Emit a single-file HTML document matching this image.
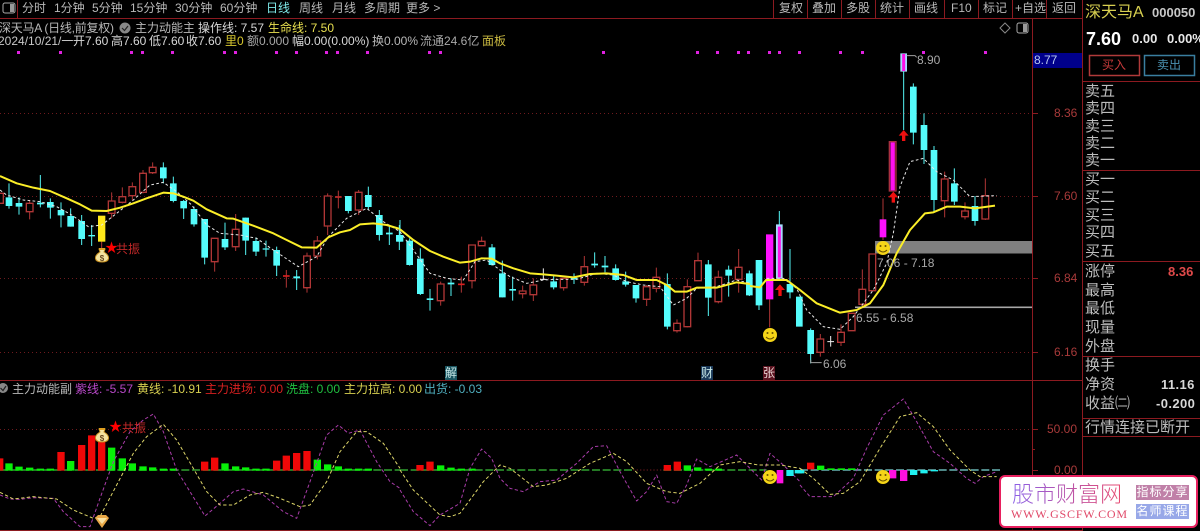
<!DOCTYPE html>
<html><head><meta charset="utf-8"><style>
html,body{margin:0;padding:0;background:#000}
#p{position:relative;width:1200px;height:531px;overflow:hidden;background:#000;font-family:"Liberation Sans","Noto Sans CJK SC",sans-serif;font-size:12px;color:#b8b8b8}
.t{position:absolute;white-space:nowrap;line-height:14px}
.r{text-align:right}
.g{color:#b4b4b4}
.big{font-size:15px;line-height:18px;color:#bdbdbd;letter-spacing:0}
svg{position:absolute;left:0;top:0}
.ax{color:#a83a3a;font-size:12px}
</style></head><body><div id="p">
<svg width="1200" height="531" viewBox="0 0 1200 531" fill="none">
<!-- chrome lines -->
<g stroke="#8c1a20" stroke-width="1">
<path d="M0 18.5H1082M17.5 0V18M773.5 0V18M807.5 0V18M841.5 0V18M875.5 0V18M909.5 0V18M944.5 0V18M978.5 0V18M1012.5 0V18M1046.5 0V18"/>
<path d="M1032.5 18V530M1082.5 0V531M0 380.5H1082M0 530.5H1082M1082 81.5H1200M1082 170.5H1200M1082 261.5H1200M1082 356.5H1200M1082 418.5H1200M1082 436.5H1200"/>
<path d="M1032 113.5H1038M1032 196.5H1038M1032 278.5H1038M1032 352.5H1038M1032 429.5H1038M1032 470.5H1038M1032 449.5H1035"/>
</g>
<g stroke="#6e1a1e" stroke-width="1" stroke-dasharray="1 3">
<path d="M0 113.5H1032M0 196.5H1032M0 278.5H1032M0 352.5H1032M0 429.5H1032"/>
</g>
<!-- levels -->
<rect x="875" y="241" width="157" height="12.5" fill="#808080"/>
<rect x="855" y="306.5" width="177" height="1.6" fill="#a8a8a8"/>
<rect x="1033" y="53" width="49" height="15" fill="#00008b"/>
<!-- purple dots -->
<g fill="#e020e0"><rect x="17" y="51" width="3" height="3"/><rect x="59" y="51" width="3" height="3"/><rect x="130" y="51" width="3" height="3"/><rect x="141" y="51" width="3" height="3"/><rect x="171" y="51" width="3" height="3"/><rect x="223" y="51" width="3" height="3"/><rect x="234" y="51" width="3" height="3"/><rect x="275" y="51" width="3" height="3"/><rect x="295" y="51" width="3" height="3"/><rect x="325" y="51" width="3" height="3"/><rect x="336" y="51" width="3" height="3"/><rect x="366" y="51" width="3" height="3"/><rect x="428" y="51" width="3" height="3"/><rect x="439" y="51" width="3" height="3"/><rect x="602" y="51" width="3" height="3"/><rect x="696" y="51" width="3" height="3"/><rect x="716" y="51" width="3" height="3"/><rect x="737" y="51" width="3" height="3"/><rect x="747" y="51" width="3" height="3"/><rect x="768" y="51" width="3" height="3"/><rect x="778" y="51" width="3" height="3"/><rect x="798" y="51" width="3" height="3"/><rect x="839" y="51" width="3" height="3"/><rect x="861" y="51" width="3" height="3"/><rect x="922" y="51" width="3" height="3"/><rect x="984" y="51" width="3" height="3"/></g>

<!-- main chart part 1 -->
<g transform="translate(0,150) scale(.33333)">
<path stroke="#55f5f5" stroke-width="3" d="M27 100V176M57 142V194M121 75V172M151 145V206M183 157V232M212 175V230M245 195V285M275 225V288M490 37V100M520 80V157M551 150V207M582 170V230M614 207V343M675 218V300M737 203V315M768 262V318M798 272V320M830 290V378M890 360V420M1045 138V190M1105 110V178M1138 180V272M1168 230V285M1198 225V300"/>
<path stroke="#55fcfc" stroke-width="20" d="M27 142V168M57 159V170M151 156V173M183 180V196M212 198V230M245 213V267M490 52V85M520 100V153M551 153V175M582 177V223M614 207V323M675 267V292M737 203V272M768 273V305M830 300V347M1045 138V183M1105 135V171M1138 195V255M1198 255V275"/>
<path stroke="#55fcfc" stroke-width="20" d="M121 158V163M275 255V259M798 295V299M890 379V385M1168 248V253"/>
<path stroke="#b03636" stroke-width="3" d="M89 150V208M335 127V205M367 112V160M397 97V150M429 60V130M458 37V72M644 265V365M707 192V303M859 360V413M921 308V428M952 258V328M983 130V255M1015 122V175M1076 120V195M305 275V298"/>
<path stroke="#b03636" stroke-width="4" fill="#000" d="M-10 130h20V160h-20zM79 160h20V185h-20zM325 153h20V190h-20zM357 140h20V157h-20zM387 110h20V137h-20zM419 70h20V127h-20zM448 52h20V68h-20zM634 265h20V335h-20zM697 238h20V290h-20zM911 318h20V413h-20zM942 273h20V318h-20zM973 138h20V228h-20zM1066 127h20V180h-20z"/>
<path stroke="#d82020" stroke-width="5" d="M849 378H869"/>
<path stroke="#c02c2c" stroke-width="5" d="M1005 141H1025"/>
<path stroke="#ffe81a" stroke-width="22" d="M305 197V275"/>
<polyline stroke="#e8e8e8" stroke-width="3" stroke-dasharray="8 7" points="0,120 20,135 70,150 120,155 170,170 215,195 265,230 305,225 350,190 400,150 450,105 490,97 530,125 575,165 620,225 660,250 720,255 770,265 820,300 850,320 895,350 950,320 985,260 1040,205 1100,175 1150,215 1200,245"/>
<polyline stroke="#fbee28" stroke-width="6" stroke-linejoin="round" points="0,78 50,100 100,113 150,123 200,145 240,163 275,182 320,183 360,173 400,160 440,145 490,128 520,130 550,140 580,152 620,178 680,205 700,206 760,227 820,250 870,275 905,292 950,293 985,262 1020,247 1050,240 1080,223 1120,220 1160,225 1200,237"/>
</g>

<!-- main chart part 2 -->
<g transform="translate(400,220) scale(.33333)">
<path stroke="#55f5f5" stroke-width="3" d="M0 0V65M29 55V137M61 85V225M90 207V272M153 175V228M276 72V137M307 122V232M338 170V242M461 165V208M522 160V192M584 97V143M615 108V157M647 133V182M677 155V200M708 195V248M802 160V328M925 120V288M986 137V230M1048 152V228M1077 120V270M1170 87V235"/>
<path stroke="#55fcfc" stroke-width="20" d="M0 45V65M29 62V135M61 116V222M276 82V135M307 160V232M461 184V202M647 145V180M677 184V194M708 195V235M802 192V320M925 133V233M986 149V167M1048 160V226M1077 120V256M1170 192V217M1198 230V320"/>
<path stroke="#55fcfc" stroke-width="20" d="M90 235V240M153 188V193M338 207V212M522 173V178M584 131V136M615 137V142"/>
<path stroke="#eee" stroke-width="3" d="M430 145V180M420 178H440"/>
<path stroke="#b03636" stroke-width="3" d="M122 185V257M184 170V218M216 75V205M245 50V78M368 197V235M400 175V243M491 175V212M553 108V197M740 195V258M769 143V217M831 298V338M862 178V322M894 98V183M955 152V250M1016 87V218M1109 238V322"/>
<path stroke="#b03636" stroke-width="4" fill="#000" d="M112 192h20V242h-20zM206 75h20V182h-20zM235 64h20V77h-20zM358 213h20V221h-20zM390 195h20V224h-20zM481 175h20V203h-20zM543 140h20V187h-20zM730 200h20V238h-20zM759 172h20V205h-20zM821 310h20V332h-20zM852 200h20V320h-20zM884 122h20V182h-20zM945 172h20V245h-20zM1006 142h20V178h-20z"/>
<path stroke="#d82020" stroke-width="5" d="M174 193H194"/>
<path stroke="#ff10ff" stroke-width="22" d="M1109 43V238"/>
<polyline stroke="#e8e8e8" stroke-width="3" stroke-dasharray="8 7" points="0,35 40,90 90,160 140,175 190,180 225,125 260,120 300,150 330,170 380,190 430,180 470,178 530,178 590,160 640,165 680,185 730,195 780,200 820,255 860,235 890,205 950,200 1010,180 1050,190"/>
<polyline stroke="#fbee28" stroke-width="6" stroke-linejoin="round" points="0,28 40,60 90,93 130,110 180,128 210,125 245,115 275,116 300,130 340,145 390,160 430,163 470,167 520,172 570,162 620,160 670,165 710,180 770,180 800,195 825,215 860,215 890,203 950,203 1010,187 1050,192"/>
</g>

<!-- main chart part 3 -->
<g transform="translate(750,40) scale(.33333)">
<path stroke="#55f5f5" stroke-width="3" d="M88 513V720M182 865V970M461 95V270M490 130V313M522 220V372M552 318V515M613 385V495M675 468V557"/>
<path stroke="#a8d8ff" stroke-width="20" d="M88 553V716M461 40V95"/>
<path stroke="#ff10e8" stroke-width="9" d="M88 560V712M461 42V93"/>
<path stroke="#55fcfc" stroke-width="20" d="M182 870V942M490 140V278M522 255V330M552 330V480M613 430V485M675 498V543"/>
<path stroke="#eee" stroke-width="3" d="M242 888V920M232 905H252"/>
<path stroke="#b03636" stroke-width="3" d="M211 882V950M273 853V918M305 820V872M337 688V800M367 642V752M399 475V600M584 395V532M645 487V538M706 415V540"/>
<path stroke="#b03636" stroke-width="4" fill="#000" d="M201 897h20V937h-20zM263 877h20V907h-20zM295 820h20V872h-20zM327 748h20V793h-20zM357 642h20V752h-20zM574 417h20V482h-20zM635 513h20V530h-20zM696 467h20V537h-20z"/>
<path stroke="#ff10ff" stroke-width="20" d="M399 538V592"/>
<path stroke="#a83040" stroke-width="4" fill="#3a0818" d="M418 305h20V453h-20z"/>
<path stroke="#ff10f0" stroke-width="13" d="M428 307V451"/>
<g fill="#ee1010"><path d="M90 733L105 750H95V768H85V750H75Z"/><path d="M430 455L445 472H435V488H425V472H415Z"/><path d="M461 270L476 287H466V303H456V287H446Z"/></g>
<path stroke="#a0a0a0" stroke-width="3" d="M182 960V968H215M470 47H495L500 52"/>
<polyline stroke="#e8e8e8" stroke-width="3" stroke-dasharray="8 7" points="50,715 100,715 140,745 170,810 220,860 270,868 310,830 370,750 410,670 430,580 450,440 480,365 520,355 560,395 610,420 660,470 740,467"/>
<polyline stroke="#fbee28" stroke-width="6" stroke-linejoin="round" points="0,738 30,742 48,720 110,720 150,750 200,790 270,818 320,810 360,790 400,735 440,640 480,570 525,520 550,517 590,500 630,500 675,505 735,497"/>
</g>

<!-- sub chart -->
<g transform="translate(0,375) scale(.33333)">
<path stroke="#2a8a2a" stroke-width="5" stroke-dasharray="24 8" d="M0 285H1200"/>
<path stroke="#f00808" stroke-width="22" d="M-1 250V287M183 231V287M245 210V287M275 181V287M305 200V287M614 260V287M644 248V287M830 257V287M859 242V287M890 234V287M921 228V287"/>
<path stroke="#08f008" stroke-width="22" d="M27 265V287M57 275V287M89 278V287M121 281V287M151 281V287M212 258V287M335 218V287M367 250V287M397 265V287M429 274V287M458 277V287M490 281V287M520 281V287M675 265V287M707 274V287M737 277V287M768 281V287M798 281V287M952 254V287M983 268V287M1015 274V287M1045 281V287M1076 281V287M1105 281V287"/>
<polyline stroke="#a83ca8" stroke-width="3" stroke-dasharray="10 7" stroke-linejoin="round" points="0,360 30,372 60,373 100,368 160,370 190,410 240,455 270,455 300,370 340,260 390,170 430,135 460,117 490,170 530,285 570,350 615,423 660,385 700,350 730,342 790,360 850,410 890,430 930,320 980,180 1015,150 1045,175 1080,165 1130,260 1170,320 1200,340"/>
<polyline stroke="#dcd468" stroke-width="3" stroke-dasharray="10 7" stroke-linejoin="round" points="0,352 40,372 100,365 170,372 220,405 280,430 300,425 350,330 400,235 440,185 490,148 530,195 580,280 620,350 660,390 700,390 750,360 790,352 840,370 900,395 930,390 980,320 1020,230 1070,170 1100,170 1150,205 1200,280"/>
</g>
<g transform="translate(400,375) scale(.33333)">
<path stroke="#2a8a2a" stroke-width="5" stroke-dasharray="24 8" d="M0 285H700"/>
<path stroke="#6e1a1e" stroke-width="3" stroke-dasharray="4 6" d="M700 285H790"/>
<path stroke="#2a8a2a" stroke-width="5" stroke-dasharray="24 8" d="M790 285H1100"/>
<path stroke="#f00808" stroke-width="22" d="M60 270V287M90 260V287M802 270V287M832 260V287"/>
<path stroke="#08f008" stroke-width="22" d="M122 271V287M153 278V287M184 281V287M216 281V287M862 271V287M893 277V287M925 281V287M955 281V287"/>
<polyline stroke="#a83ca8" stroke-width="3" stroke-dasharray="10 7" stroke-linejoin="round" points="0,345 40,410 90,452 120,420 180,385 210,280 245,222 275,250 300,310 330,340 370,350 420,320 470,315 530,265 580,215 620,212 660,290 710,378 740,350 770,300 800,380 830,385 860,330 890,252 930,275 1010,240 1050,280 1085,315 1110,235 1150,270 1200,320"/>
<polyline stroke="#dcd468" stroke-width="3" stroke-dasharray="10 7" stroke-linejoin="round" points="0,285 40,345 120,420 150,425 180,415 250,320 300,270 330,280 400,335 440,330 500,310 570,265 640,235 680,260 740,325 800,350 840,355 900,325 960,270 1020,260 1075,270 1140,270 1200,280"/>
<path stroke="#ff10e0" stroke-width="20" d="M1140 285V325"/>
<path stroke="#20f0f0" stroke-width="22" d="M1170 285V303M1195 285V295"/>
</g>
<g transform="translate(800,375) scale(.33333)">
<path stroke="#5a9a9a" stroke-width="5" stroke-dasharray="24 8" d="M0 285H600"/>
<path stroke="#f00808" stroke-width="22" d="M32 263V283"/>
<path stroke="#08f008" stroke-width="22" d="M62 272V285M93 280V285M124 280V285M155 280V285"/>
<path stroke="#20f0f0" stroke-width="22" d="M341 285V300M372 285V295M403 285V289M2 285V295"/>
<path stroke="#ff10e0" stroke-width="22" d="M278 285V310M311 285V318"/>
<polyline stroke="#a83ca8" stroke-width="3" stroke-dasharray="10 7" stroke-linejoin="round" points="0,330 30,365 100,365 160,310 200,220 250,120 310,72 350,140 400,230 450,265 500,310 525,325 550,305 590,290"/>
<polyline stroke="#dcd468" stroke-width="3" stroke-dasharray="10 7" stroke-linejoin="round" points="0,280 40,310 90,358 130,355 180,320 240,220 300,125 350,113 400,155 450,225 510,285 540,305 590,305"/>
</g>

<!-- smileys -->
<g id="s1"><circle cx="770" cy="335" r="7" fill="#f5d518"/><circle cx="767.5" cy="333" r="1" fill="#6a5200"/><circle cx="772.5" cy="333" r="1" fill="#6a5200"/><path d="M766 337Q770 341 774 337" stroke="#6a5200" stroke-width="1"/></g>
<g transform="translate(113,-87)"><circle cx="770" cy="335" r="7" fill="#f5d518"/><circle cx="767.5" cy="333" r="1" fill="#6a5200"/><circle cx="772.5" cy="333" r="1" fill="#6a5200"/><path d="M766 337Q770 341 774 337" stroke="#6a5200" stroke-width="1"/></g>
<g transform="translate(0,142)"><circle cx="770" cy="335" r="7" fill="#f5d518"/><circle cx="767.5" cy="333" r="1" fill="#6a5200"/><circle cx="772.5" cy="333" r="1" fill="#6a5200"/><path d="M766 337Q770 341 774 337" stroke="#6a5200" stroke-width="1"/></g>
<g transform="translate(113,142)"><circle cx="770" cy="335" r="7" fill="#f5d518"/><circle cx="767.5" cy="333" r="1" fill="#6a5200"/><circle cx="772.5" cy="333" r="1" fill="#6a5200"/><path d="M766 337Q770 341 774 337" stroke="#6a5200" stroke-width="1"/></g>

<!-- money bags -->
<g><path d="M99 249H105L104 252Q109 255 108.500 258.500Q108 262 102 262Q96 262 95.500 258.500Q95 255 100 252Z" fill="#f4e4a0" stroke="#c89020" stroke-width="1"/><text x="102" y="261" font-size="8" font-weight="bold" fill="#6a4a20" text-anchor="middle" font-family="Liberation Sans">$</text><rect x="99" y="248" width="6" height="2" fill="#e0a020"/></g>
<g transform="translate(0,180)"><path d="M99 249H105L104 252Q109 255 108.500 258.500Q108 262 102 262Q96 262 95.500 258.500Q95 255 100 252Z" fill="#f4e4a0" stroke="#c89020" stroke-width="1"/><text x="102" y="261" font-size="8" font-weight="bold" fill="#6a4a20" text-anchor="middle" font-family="Liberation Sans">$</text><rect x="99" y="248" width="6" height="2" fill="#e0a020"/></g>
<!-- diamond -->
<path d="M95 518L98 515H106L109 518L102 528Z" fill="#e8a848"/><path d="M97 518H107L102 524Z" fill="#f8e0a0"/>

<!-- toolbar icons -->
<rect x="3" y="3" width="12" height="10" rx="2" fill="none" stroke="#aaa" stroke-width="1"/><rect x="10" y="4" width="4" height="8" fill="#999"/>
<circle cx="125" cy="28" r="5.500" fill="#888"/><path d="M122 28L124.500 30.500L128 26" stroke="#222" stroke-width="1.200"/>
<circle cx="3" cy="388" r="5" fill="#888"/><path d="M0.500 388L3 390.500L6 386" stroke="#222" stroke-width="1.200"/>
<path d="M1005 23L1010 28L1005 33L1000 28Z" stroke="#888" stroke-width="1"/>
<rect x="1017" y="23" width="11" height="10" rx="2" stroke="#aaa" stroke-width="1"/><rect x="1023" y="24" width="4" height="8" fill="#999"/>
<!-- buy/sell -->
<rect x="1089.500" y="55.500" width="50" height="20" stroke="#b03a3a" stroke-width="1.500"/>
<rect x="1144.500" y="55.500" width="50" height="20" stroke="#3a7ea0" stroke-width="1.500"/>
</svg>

<!-- top menu -->
<span class="t" style="left:22px;top:1px">分时</span>
<span class="t" style="left:54px;top:1px">1分钟</span>
<span class="t" style="left:92px;top:1px">5分钟</span>
<span class="t" style="left:130px;top:1px">15分钟</span>
<span class="t" style="left:175px;top:1px">30分钟</span>
<span class="t" style="left:220px;top:1px">60分钟</span>
<span class="t" style="left:266px;top:1px;color:#7ee8e8">日线</span>
<span class="t" style="left:299px;top:1px">周线</span>
<span class="t" style="left:332px;top:1px">月线</span>
<span class="t" style="left:364px;top:1px">多周期</span>
<span class="t" style="left:406px;top:1px">更多 &gt;</span>
<span class="t" style="left:779px;top:1px">复权</span>
<span class="t" style="left:812px;top:1px">叠加</span>
<span class="t" style="left:846px;top:1px">多股</span>
<span class="t" style="left:880px;top:1px">统计</span>
<span class="t" style="left:914px;top:1px">画线</span>
<span class="t" style="left:951px;top:1px">F10</span>
<span class="t" style="left:983px;top:1px">标记</span>
<span class="t" style="left:1015px;top:1px">+自选</span>
<span class="t" style="left:1052px;top:1px">返回</span>

<!-- line 2 -->
<span class="t" style="left:-1px;top:21px;letter-spacing:-.25px">深天马A (日线,前复权)</span>
<span class="t" style="left:135px;top:21px">主力动能主</span>
<span class="t" style="left:198px;top:21px;color:#d8d8d8">操作线: 7.57</span>
<span class="t" style="left:268px;top:21px;color:#e8e050">生命线: 7.50</span>
<!-- line 3 -->
<span class="t" style="left:-2px;top:34px;color:#c8c8c8">2024/10/21/一</span>
<span class="t" style="left:73px;top:34px;color:#d8d8d8">开7.60</span>
<span class="t" style="left:111px;top:34px;color:#d8d8d8">高7.60</span>
<span class="t" style="left:149px;top:34px;color:#d8d8d8">低7.60</span>
<span class="t" style="left:186px;top:34px;color:#d8d8d8">收7.60</span>
<span class="t" style="left:225px;top:34px;color:#d8c830">里0</span>
<span class="t" style="left:247px;top:34px;color:#a8a8a8">额0.000</span>
<span class="t" style="left:292px;top:34px;color:#d8d8d8">幅0.00(0.00%)</span>
<span class="t" style="left:372px;top:34px;color:#b8b8b8">换0.00%</span>
<span class="t" style="left:420px;top:34px;color:#a8a8a8">流通24.6亿</span>
<span class="t" style="left:482px;top:34px;color:#c8b840">面板</span>

<!-- chart labels -->
<span class="t" style="left:116px;top:242px;color:#c02828;font-size:12px">共振</span>
<span class="t" style="left:105px;top:241px;color:#f00;font-size:13px">★</span>
<span class="t" style="left:109px;top:420px;color:#f00;font-size:13px">★</span>
<span class="t" style="left:122px;top:421px;color:#c02828;font-size:12px">共振</span>
<span class="t" style="left:917px;top:53px;color:#a8a8a8">8.90</span>
<span class="t" style="left:823px;top:357px;color:#a8a8a8">6.06</span>
<span class="t" style="left:877px;top:256px;color:#a8a8a8">7.06 - 7.18</span>
<span class="t" style="left:856px;top:311px;color:#a8a8a8">6.55 - 6.58</span>
<span class="t" style="left:445px;top:366px;width:12px;height:14px;background:#1a5560;color:#c8e8e8">解</span>
<span class="t" style="left:701px;top:366px;width:12px;height:14px;background:#1a3858;color:#c8e8e8">财</span>
<span class="t" style="left:763px;top:366px;width:12px;height:14px;background:#5a1420;color:#e8d0d0">张</span>

<!-- axis -->
<span class="t" style="left:1034px;top:53px;color:#b8c8f0">8.77</span>
<span class="t ax" style="left:1054px;top:106px">8.36</span>
<span class="t ax" style="left:1054px;top:189px">7.60</span>
<span class="t ax" style="left:1054px;top:271px">6.84</span>
<span class="t ax" style="left:1054px;top:345px">6.16</span>
<span class="t ax" style="left:1047px;top:422px">50.00</span>
<span class="t ax" style="left:1054px;top:463px">0.00</span>

<!-- sub header -->
<span class="t" style="left:12px;top:382px">主力动能副</span>
<span class="t" style="left:75px;top:382px;color:#b848c8">紫线: -5.57</span>
<span class="t" style="left:137px;top:382px;color:#d8d050">黄线: -10.91</span>
<span class="t" style="left:205px;top:382px;color:#d82020">主力进场: 0.00</span>
<span class="t" style="left:286px;top:382px;color:#20c040">洗盘: 0.00</span>
<span class="t" style="left:344px;top:382px;color:#d8d050">主力拉高: 0.00</span>
<span class="t" style="left:424px;top:382px;color:#50b0c0">出货: -0.03</span>

<!-- right panel -->
<span class="t" style="left:1085px;top:4px;font-size:16px;line-height:18px;color:#d8d050">深天马A</span>
<span class="t" style="left:1152px;top:6px;font-size:13px;font-weight:bold;color:#c8c8c8">000050</span>
<span class="t" style="left:1086px;top:29px;font-size:18px;line-height:20px;font-weight:bold;color:#fff">7.60</span>
<span class="t" style="left:1132px;top:32px;font-size:13px;font-weight:bold;color:#e8e8e8">0.00</span>
<span class="t" style="left:1167px;top:32px;font-size:13px;font-weight:bold;color:#e8e8e8">0.00%</span>
<span class="t" style="left:1102px;top:58px;color:#c83a3a">买入</span>
<span class="t" style="left:1157px;top:58px;color:#4a90b0">卖出</span>
<span class="t big" style="left:1085px;top:83px">卖五</span>
<span class="t big" style="left:1085px;top:100px">卖四</span>
<span class="t big" style="left:1085px;top:118px">卖三</span>
<span class="t big" style="left:1085px;top:135px">卖二</span>
<span class="t big" style="left:1085px;top:152px">卖一</span>
<span class="t big" style="left:1085px;top:171px">买一</span>
<span class="t big" style="left:1085px;top:189px">买二</span>
<span class="t big" style="left:1085px;top:207px">买三</span>
<span class="t big" style="left:1085px;top:224px">买四</span>
<span class="t big" style="left:1085px;top:243px">买五</span>
<span class="t big" style="left:1085px;top:263px">涨停</span>
<span class="t big" style="left:1085px;top:282px">最高</span>
<span class="t big" style="left:1085px;top:300px">最低</span>
<span class="t big" style="left:1085px;top:319px">现量</span>
<span class="t big" style="left:1085px;top:338px">外盘</span>
<span class="t big" style="left:1085px;top:357px">换手</span>
<span class="t big" style="left:1085px;top:376px">净资</span>
<span class="t big" style="left:1085px;top:395px">收益㈡</span>
<span class="t big" style="left:1085px;top:419px">行情连接已断开</span>
<span class="t" style="left:1168px;top:265px;font-size:13px;font-weight:bold;color:#e04a4a">8.36</span>
<span class="t" style="left:1161px;top:378px;font-size:13px;letter-spacing:.4px;font-weight:bold;color:#d8d8d8">11.16</span>
<span class="t" style="left:1156px;top:397px;font-size:13px;letter-spacing:.4px;font-weight:bold;color:#d8d8d8">-0.200</span>

<!-- watermark -->
<div style="position:absolute;left:999px;top:475px;width:195px;height:49px;background:#fff;border:2px solid #e8205f;border-radius:6px"></div>
<span class="t" style="left:1012px;top:483px;font-size:22px;line-height:24px;font-weight:300;background:linear-gradient(90deg,#8a60e8,#e84a70);-webkit-background-clip:text;background-clip:text;color:transparent">股市财富网</span>
<span class="t" style="left:1011px;top:507px;font-family:'Liberation Serif',serif;font-size:12px;letter-spacing:.8px;color:#e04868">WWW.GSCFW.COM</span>
<span class="t" style="left:1136px;top:485px;width:53px;height:15px;line-height:15px;background:#c080a8;color:#fff;text-align:center;font-size:12px;letter-spacing:1px">指标分享</span>
<span class="t" style="left:1136px;top:504px;width:53px;height:15px;line-height:15px;background:#98a8e8;color:#fff;text-align:center;font-size:12px;letter-spacing:1px">名师课程</span>
</div></body></html>
